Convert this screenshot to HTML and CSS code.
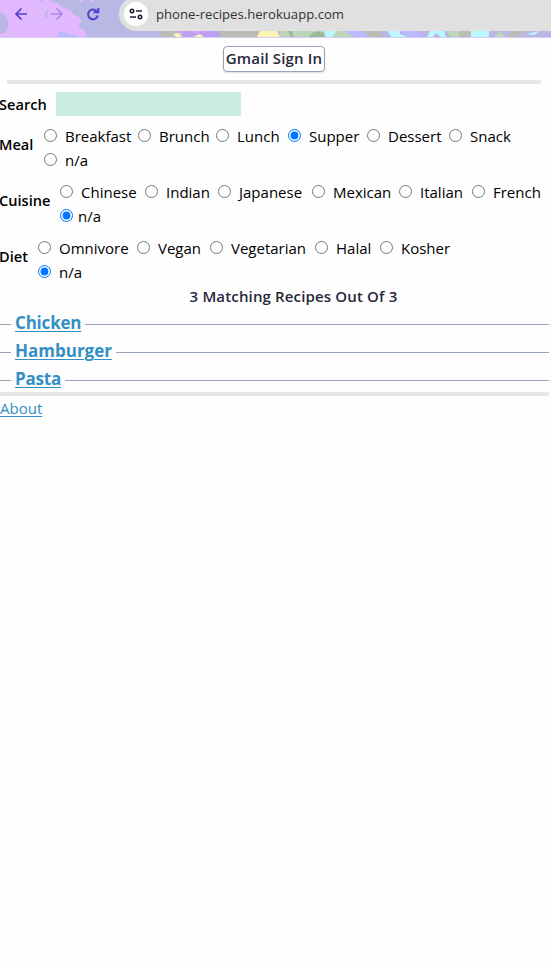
FILE: index.html
```html
<!DOCTYPE html>
<html lang="en">
<head>
<meta charset="utf-8">
<title>Phone Recipes</title>
<link rel="stylesheet" href="styles.css">
</head>
<body>
<div class="browser">
  <svg class="theme" width="551" height="38" viewBox="0 0 551 38" aria-hidden="true">
    <rect width="551" height="38" fill="#b9b8e4"/>
    <path fill="#e2b9ff" d="M0 0H54L62 7Q70 8 74 15Q82 17 81 22Q76 26 83 30Q87 33 86 37H0V34Q9 33 8 22Q7 14 0 12Z"/>
    <path fill="#b9b8e4" d="M38 0H43L41 2ZM49 0H78V11Q70 9 66 8Q62 9 60 3Q53 4 49 0Z"/>
    <path fill="#e2b9ff" d="M78 0H84L81 3ZM89 0H94L92 2Z"/>
    <path fill="#b9b9ff" d="M58 31L81 37H58Z"/>
    <path fill="#bbbcb7" d="M160 31H178L181 37H160ZM220 31H262L257 37H220ZM364 31H379L384 37H370ZM450 31H471V37H447ZM512 31H524L518 37H508Z"/>
    <path fill="#bda0f0" d="M183 31H220V37H183Z"/>
    <path fill="#e39cf5" d="M178 31H183L181 34ZM192 31H203L196 34Z"/>
    <path fill="#fff3b8" d="M173 34L179 33L182 37H176ZM193 37L200 34L204 37ZM260 31H277L280 37H257Z"/>
    <path fill="#bcd5bc" d="M279 31H326L318 37H281ZM330 31H350L360 37H330ZM446 31H459V37H450ZM494 37L500 31L506 37Z"/>
    <path fill="#9cb995" d="M288 31H292L294 37H291ZM311 34Q316 29 324 33V37H309Z"/>
    <path fill="#bcf7ff" d="M324 31H337L332 37H326ZM388 31H400V34L408 37H391ZM427 37L430 31H444L446 37H441L436 33L433 37ZM471 31H489V37H471ZM526 34L540 31L534 35Z"/>
    <path fill="#b9b9ff" d="M345 31H362L369 37H354ZM400 31H419L423 37H408Z"/>
  </svg>
  <div class="address">
    <span class="site">
      <svg width="16" height="16" viewBox="0 0 16 16" fill="none" stroke="#222238" stroke-width="1.6"><circle cx="4" cy="5" r="1.7"/><path d="M8 5H14M2 11H8"/><circle cx="12" cy="11" r="1.7"/></svg>
    </span>
    <span>phone-recipes.herokuapp.com</span>
  </div>
  <svg class="nav" width="110" height="30" viewBox="0 0 110 30" fill="none" stroke-width="1.7" aria-hidden="true">
    <path stroke="#5140cf" d="M27 14H16M21.500 8.500L16 14L21.500 19.500"/>
    <path stroke="#a58be8" d="M51 14H62M56.500 8.500L62 14L56.500 19.500"/>
    <path stroke="#b9b8e4" stroke-width="2" d="M49 10Q44 13 47 18"/>
    <path stroke="#5140cf" stroke-width="2" d="M97 11.500A4.900 4.900 0 1 0 97.800 15.500M98.300 8V12.300H93.500"/>
  </svg>
</div>
<header class="top"><button class="signin">Gmail Sign In</button></header>
<main>
  <div class="search"><label for="q">Search</label><input id="q" type="text"></div>
  <div class="filter">
    <b class="name meal-name">Meal</b>
    <div class="options meal">
      <label><input type="radio" name="meal"><span>Breakfast</span></label>
      <label><input type="radio" name="meal"><span>Brunch</span></label>
      <label><input type="radio" name="meal"><span>Lunch</span></label>
      <label><input type="radio" name="meal" checked><span>Supper</span></label>
      <label><input type="radio" name="meal"><span>Dessert</span></label>
      <label><input type="radio" name="meal"><span>Snack</span></label>
      <label><input type="radio" name="meal"><span>n/a</span></label>
    </div>
  </div>
  <div class="filter">
    <b class="name cuisine-name">Cuisine</b>
    <div class="options cuisine">
      <label><input type="radio" name="cuisine"><span>Chinese</span></label>
      <label><input type="radio" name="cuisine"><span>Indian</span></label>
      <label><input type="radio" name="cuisine"><span>Japanese</span></label>
      <label><input type="radio" name="cuisine"><span>Mexican</span></label>
      <label><input type="radio" name="cuisine"><span>Italian</span></label>
      <label><input type="radio" name="cuisine"><span>French</span></label>
      <label class="tight"><input type="radio" name="cuisine" checked><span>n/a</span></label>
    </div>
  </div>
  <div class="filter">
    <b class="name diet-name">Diet</b>
    <div class="options diet">
      <label><input type="radio" name="diet"><span>Omnivore</span></label>
      <label><input type="radio" name="diet"><span>Vegan</span></label>
      <label><input type="radio" name="diet"><span>Vegetarian</span></label>
      <label><input type="radio" name="diet"><span>Halal</span></label>
      <label><input type="radio" name="diet"><span>Kosher</span></label>
      <label class="first"><input type="radio" name="diet" checked><span>n/a</span></label>
    </div>
  </div>
  <p class="count">3 Matching Recipes Out Of 3</p>
  <div class="recipe"><a href="#">Chicken</a></div>
  <div class="recipe hamburger"><a href="#">Hamburger</a></div>
  <div class="recipe"><a href="#">Pasta</a></div>
</main>
<footer><a href="#">About</a></footer>
</body>
</html>
```
FILE: styles.css
```css
* { box-sizing: border-box; }
body { margin: 0; min-height: 967px; background: #fefefe; color: #000; font: 15px/24px "Open Sans", "Noto Sans", sans-serif; }
.browser { position: relative; height: 38px; border-bottom: 1px solid #d4cdf5; overflow: hidden; }
.theme, .nav { position: absolute; left: 0; top: 0; }
.address { position: relative; display: flex; align-items: center; gap: 8px; height: 34px; margin: -3px 0 0 119px; padding: 0 0 0 5px; background: #e0e0e0; border-radius: 17px 0 0 17px; color: #333; font-size: 13.15px; }
.site { display: flex; align-items: center; justify-content: center; width: 24px; height: 24px; border-radius: 50%; background: #fff; }
.top { display: flex; justify-content: center; align-items: flex-start; height: 46px; margin: 0 10px 0 7px; padding-top: 8px; border-bottom: 4px solid #e5e7eb; }
.signin { width: 102px; height: 26px; padding: 0 0 2px; border: 1px solid #94a3b8; border-radius: 4px; background: #fff; box-shadow: 0 1px 2px #0002; color: #27273a; font: 600 15px/22px "Open Sans", sans-serif; letter-spacing: .15px; white-space: nowrap; }
.search { display: flex; height: 24px; margin-top: 8px; font-weight: 600; font-size: 14.6px; }
.search label { width: 56px; margin-left: -1px; }
.search input { width: 185px; height: 24px; margin-left: 1px; padding: 0; border: 0; background: #cbede2; }
.filter { display: flex; align-items: center; height: 56px; }
.name { flex: none; font-weight: 600; font-size: 14.6px; text-indent: -1px; }
.meal-name { width: 44px; }
.cuisine-name { width: 60px; }
.diet-name { width: 38px; }
.options { display: grid; grid-auto-rows: 24px; margin-top: 8px; white-space: nowrap; }
.meal { grid-template-columns: 94px 78px 72px 79px 82px 80px; }
.cuisine { grid-template-columns: 85px 73px 94px 87px 73px 75px; }
.diet { grid-template-columns: 99px 73px 105px 65px 75px; }
.options label { display: flex; gap: 8px; }
.options .tight { gap: 5px; }
.options .first { grid-column: 1; grid-row: 2; }
input[type="radio"] { width: 13px; height: 13px; margin: 5px 0 0; }
.count { margin: 0 0 0 36px; text-align: center; color: #27273a; font-weight: 600; letter-spacing: .15px; }
.recipe { display: flex; align-items: center; gap: 4px; height: 28px; margin-right: 2px; font-size: 17px; font-weight: 700; letter-spacing: -.2px; }
.hamburger { letter-spacing: 0; }
.recipe a { margin-top: 2px; }
.recipe::before, .recipe::after { content: ""; height: 1px; margin-top: 5px; background: #94a3b8; }
.recipe::before { width: 11px; }
.recipe::after { flex: 1; }
a { color: #338fc4; text-underline-offset: 2px; text-decoration-thickness: 1px; }
footer { margin-right: 2px; border-top: 4px solid #e5e7eb; }
```
